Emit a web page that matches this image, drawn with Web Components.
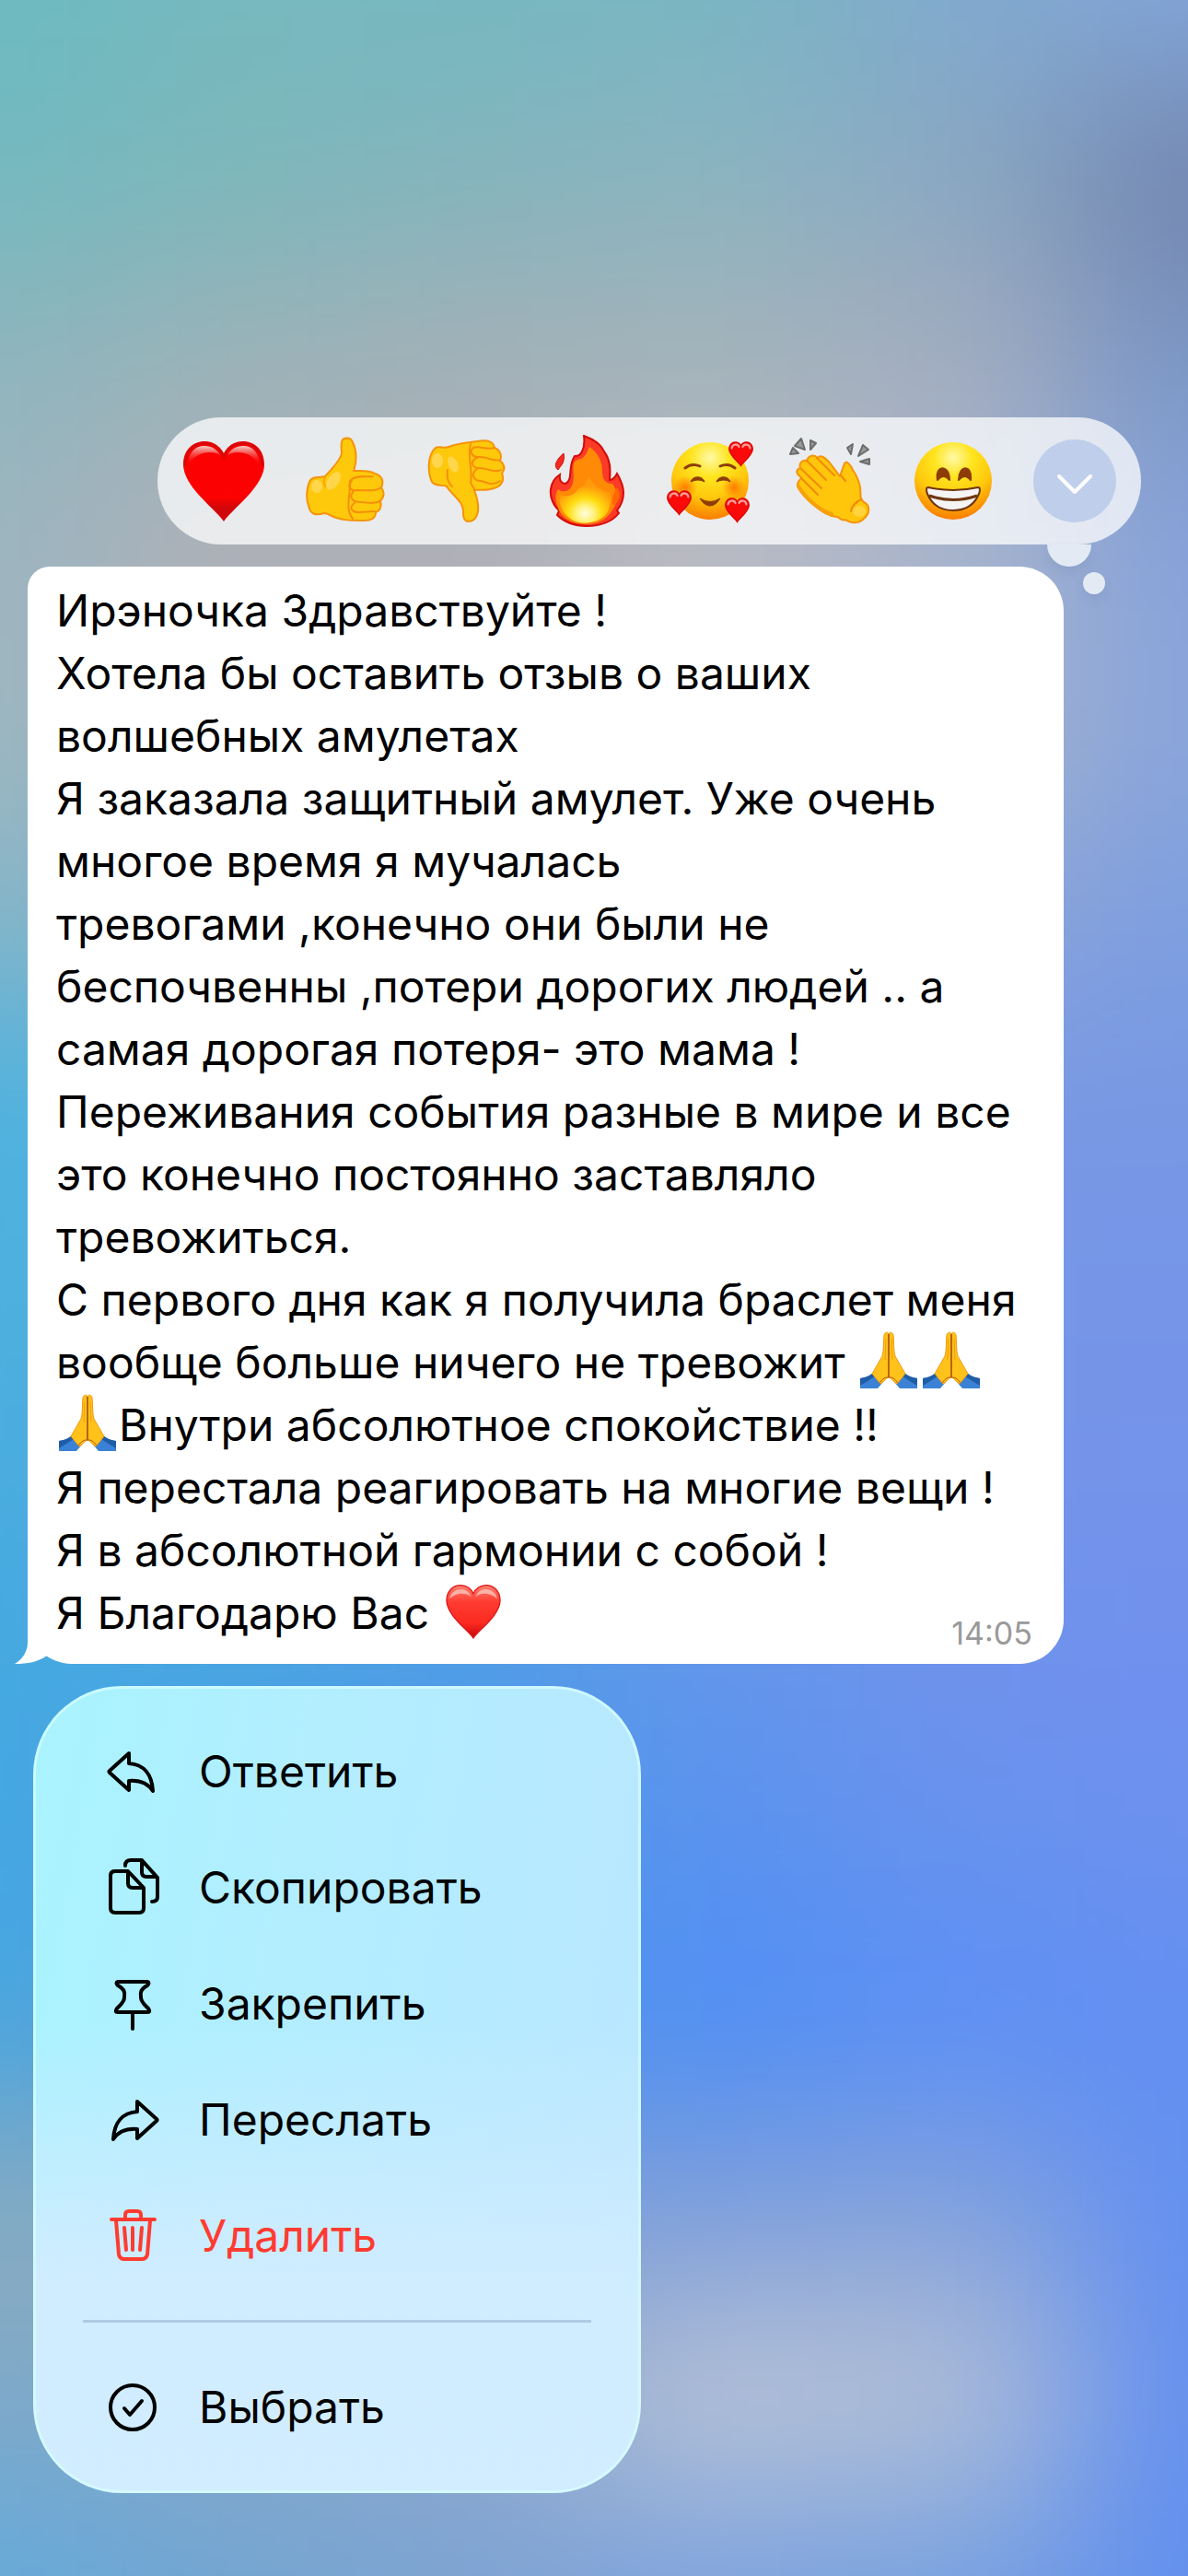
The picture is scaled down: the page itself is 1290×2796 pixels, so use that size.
<!DOCTYPE html>
<html lang="ru">
<head>
<meta charset="utf-8">
<meta name="viewport" content="width=device-width, initial-scale=1">
<title>Сообщение</title>
<style>
html, body {
    margin: 0;
    min-height: 100%;
}
body {
    font-family: Inter, "Noto Sans", sans-serif;
    font-size: 48px;
    line-height: 68px;
    color: #000;
    background: #6c97e4;
}
</style>
</head>
<body>
<message-overlay>
    <reaction-bar slot="reactions"></reaction-bar>
    <message-bubble time="14:05">Ирэночка Здравствуйте !<br>
Хотела бы оставить отзыв о ваших<br>
волшебных амулетах<br>
Я заказала защитный амулет. Уже очень<br>
многое время я мучалась<br>
тревогами ,конечно они были не<br>
беспочвенны ,потери дорогих людей .. а<br>
самая дорогая потеря- это мама !<br>
Переживания события разные в мире и все<br>
это конечно постоянно заставляло<br>
тревожиться.<br>
С первого дня как я получила браслет меня<br>
вообще больше ничего не тревожит <emoji-icon name="pray"></emoji-icon><emoji-icon name="pray"></emoji-icon><br>
<emoji-icon name="pray"></emoji-icon>Внутри абсолютное спокойствие !!<br>
Я перестала реагировать на многие вещи !<br>
Я в абсолютной гармонии с собой !<br>
Я Благодарю Вас <emoji-icon name="love"></emoji-icon></message-bubble>
    <context-menu slot="menu">
        <menu-item icon="reply">Ответить</menu-item>
        <menu-item icon="copy">Скопировать</menu-item>
        <menu-item icon="pin">Закрепить</menu-item>
        <menu-item icon="forward">Переслать</menu-item>
        <menu-item icon="trash" danger>Удалить</menu-item>
        <hr>
        <menu-item icon="select">Выбрать</menu-item>
    </context-menu>
</message-overlay>

<script>
//Drawings//////////////////////////////////////////////////////////////
const faceDefs = `
<radialGradient id="face" cx=".5" cy=".2" r=".82">
    <stop offset="0" stop-color="#fff9a8"/>
    <stop offset=".3" stop-color="#ffe51f"/>
    <stop offset=".62" stop-color="#ffc90c"/>
    <stop offset="1" stop-color="#f97800"/>
</radialGradient>`;

const heartPath = "M50 94C43 82 6 57 6 32C6 16 17 7 29 7C39 7 47 13 50 21C53 13 61 7 71 7C83 7 94 16 94 32C94 57 57 82 50 94Z";

const smallHeart = (x, y) => `
<g transform="translate(${x} ${y}) scale(.29)">
    <path d="${heartPath}" fill="#fb0a0a" stroke="#dc0505" stroke-width="5"/>
    <path d="M16 29C17 12 39 12 43 24M57 24C61 12 83 12 84 29" fill="none" stroke="#ff9c94" stroke-width="8" stroke-linecap="round"/>
</g>`;

const emojis = {
    heart: { label: "Сердце", box: 100, art: `
        <defs>
            <linearGradient id="red" x1="0" y1="0" x2="0" y2="1">
                <stop offset="0" stop-color="#fa0000"/>
                <stop offset=".7" stop-color="#fd0202"/>
                <stop offset=".84" stop-color="#ce080b"/>
                <stop offset="1" stop-color="#d5090b"/>
            </linearGradient>
            <linearGradient id="gloss" x1="0" y1="0" x2="0" y2="1">
                <stop offset="0" stop-color="#f0d0c8"/>
                <stop offset="1" stop-color="#fd0202" stop-opacity="0"/>
            </linearGradient>
        </defs>
        <path d="${heartPath}" fill="url(#red)"/>
        <path d="M8 34C8 17 18 9 29 9C39 9 47 15 50 24C53 15 61 9 71 9C82 9 92 17 92 34" fill="none" stroke="#d90808" stroke-width="3"/>
        <path d="M11 34C11 19 19 12 29 12C37 12 43 16 46 22C38 17 20 17 11 34Z" fill="url(#gloss)"/>
        <path d="M89 34C89 19 81 12 71 12C63 12 57 16 54 22C62 17 80 17 89 34Z" fill="url(#gloss)"/>` },
    up: { label: "Нравится", box: 100, art: `
        <path d="M46 8C47 2 56 2 58 8C62 16 63 28 59 39C68 39 76 38 82 42C90 44 92 51 89 57C93 62 92 68 88 72C90 78 87 83 83 84C83 91 78 93 70 93C57 93 50 93 40 90C34 88 31 85 27 85C17 88 12 86 10 77C7 69 8 58 11 51C14 44 22 47 28 45C34 38 45 28 46 20C46 15 45 12 46 8Z" fill="#ffc90b" stroke="#f5930a" stroke-width="2"/>
        <path d="M56 49C62 43 73 46 80 45M57 50C51 56 56 61 62 60C73 60 83 62 89 57M59 61C52 69 60 73 66 73C76 74 84 75 88 71M60 74C53 79 57 84 65 84L82 83M55 50C56 65 49 80 58 91" fill="none" stroke="#f58f08" stroke-width="2" stroke-linecap="round"/>
        <path d="M28 46C25 53 28 58 33 57" fill="none" stroke="#f8a70b" stroke-width="2"/>
        <ellipse cx="19" cy="56" rx="6" ry="7" fill="#ffd64c"/>
        <ellipse cx="37" cy="50" rx="6" ry="11" fill="#ffd64c" transform="rotate(35 37 50)"/>` },
    down: { label: "Не нравится", box: 100, art: `
        <path d="M16 14C20 12 25 15 30 13C42 9 54 8 61 7C72 5 79 7 80 14C87 17 88 23 86 28C92 33 91 38 88 42C91 49 88 56 79 58C72 61 64 59 58 60C63 73 65 88 56 93C49 96 46 92 46 85C47 72 35 67 28 56C23 53 17 57 12 51C8 43 6 23 16 14Z" fill="#ffc90b" stroke="#f5930a" stroke-width="2"/>
        <path d="M80 14C71 17 63 11 57 14C52 18 56 25 63 24C72 23 79 30 86 27M61 25C52 29 56 36 63 36C73 36 80 42 87 38M61 37C54 42 57 50 65 50C73 52 77 56 86 50M54 10C50 22 57 42 54 52L58 59M29 38C28 46 29 52 34 56" fill="none" stroke="#f58f08" stroke-width="2" stroke-linecap="round"/>
        <ellipse cx="18" cy="28" rx="6" ry="8" fill="#ffd64c"/>
        <ellipse cx="35" cy="32" rx="5" ry="9" fill="#ffd64c" transform="rotate(-25 35 32)"/>` },
    fire: { label: "Огонь", box: 100, art: `
        <defs>
            <radialGradient id="glow" cx=".5" cy=".8" r=".6">
                <stop offset="0" stop-color="#fffde0"/>
                <stop offset=".3" stop-color="#fff27a"/>
                <stop offset=".55" stop-color="#ffdc10"/>
                <stop offset="1" stop-color="#ff9a0a"/>
            </radialGradient>
        </defs>
        <path d="M45 1C56 5 64 11 67 18C74 27 74 38 73 49C77 49 79 46 81 42C84 47 88 55 88 63C88 72 85 77 81 82L83 85C75 95 62 99 48 99C34 99 23 94 16 87L18 82C11 76 8 66 9 59C10 51 13 47 19 43C18 50 21 53 25 53C34 49 27 34 35 23C41 24 47 16 45 1Z" fill="#fb3a27" stroke="#d30c08" stroke-width="2"/>
        <path d="M23 20C25 30 20 33 17 38C11 34 16 26 23 20Z" fill="#f32a20" stroke="#d30c08" stroke-width="1"/>
        <path d="M51 13C61 20 65 29 65 40C65 47 68 53 76 53C82 60 83 71 77 80C69 94 58 97 47 97C35 97 23 92 18 82C14 72 13 65 17 59C21 63 29 62 32 55C37 44 29 31 38 27C46 26 48 20 51 13Z" fill="#ff8a05"/>
        <path d="M50 45C55 54 62 60 74 63C75 74 72 85 66 89C57 97 38 98 29 90C21 84 17 73 19 65C27 69 37 64 39 58C44 57 48 53 50 45Z" fill="url(#glow)"/>
        <path d="M81 57C87 65 83 73 77 77C74 72 77 64 81 57Z" fill="#ff6804"/>` },
    love: { label: "Сердце", box: 64, art: `
        <defs>
            <linearGradient id="soft" x1="0" y1="0" x2="0" y2="1">
                <stop offset="0" stop-color="#ff8074"/>
                <stop offset=".32" stop-color="#ff3b30"/>
                <stop offset=".72" stop-color="#fb2a20"/>
                <stop offset="1" stop-color="#c5050a"/>
            </linearGradient>
        </defs>
        <g transform="translate(-1 -1) scale(.66)">
            <path d="${heartPath}" fill="url(#soft)" stroke="#dd1613" stroke-width="2"/>
            <path d="M11 29C13 11 41 7 46 26C37 18 21 20 11 29ZM89 29C87 11 59 7 54 26C63 18 79 20 89 29Z" fill="#ffb1a6"/>
        </g>` },
    hearts: { label: "Влюблён", box: 100, art: `
        <defs>${faceDefs}
            <radialGradient id="cheek">
                <stop offset="0" stop-color="#ff6a00" stop-opacity=".85"/>
                <stop offset="1" stop-color="#ff7a00" stop-opacity="0"/>
            </radialGradient>
        </defs>
        <circle cx="50" cy="50" r="42" fill="url(#face)"/>
        <circle cx="23" cy="57" r="13" fill="url(#cheek)"/>
        <circle cx="76" cy="57" r="13" fill="url(#cheek)"/>
        <path d="M23 36Q30 30 39 34M61 34Q70 30 77 36" fill="none" stroke="#8e3d06" stroke-width="3" stroke-linecap="round"/>
        <path d="M29 51C31 44 42 44 44 51Q37 47 29 51ZM57 51C59 44 70 44 72 51Q65 47 57 51Z" fill="#8e3d06" stroke="#8e3d06" stroke-width="1"/>
        <path d="M39 69Q50 76 61 69Q56 77 50 77Q44 77 39 69Z" fill="#8e3d06" stroke="#8e3d06" stroke-linejoin="round"/>
        ${smallHeart(69, 6)}${smallHeart(2, 59)}${smallHeart(65, 67)}` },
    clap: { label: "Аплодисменты", box: 100, art: `
        <path d="M59 45L64 31C66 27 71 33 73 38C77 44 80 50 81 57C82 65 80 69 85 73C93 77 91 86 85 91C79 97 70 96 65 92C61 94 59 90 56 89C46 88 39 84 32 76C24 69 15 60 13 55C12 50 17 49 17 46C12 43 10 38 16 36C14 30 19 27 23 28C25 22 31 21 35 25C38 21 43 25 47 29Z" fill="#ffc60b" stroke="#f5930a" stroke-width="2" stroke-linejoin="round"/>
        <path d="M23 28L44 49M34 25L53 44M17 37L39 58M17 47L35 65M60 44L65 50M82 70C76 73 72 77 71 83" fill="none" stroke="#f18a08" stroke-width="2" stroke-linecap="round"/>
        <path d="M14 56C20 67 36 82 50 86" fill="none" stroke="#f7a00a" stroke-width="4" stroke-linecap="round"/>
        <ellipse cx="80" cy="83" rx="7" ry="6" fill="#ffd43d"/>
        <path d="M17 4L10 12L21 16ZM27 6L33 9L27 16ZM8 14L14 20L5 21ZM73 10L67 14L71 21ZM84 11L90 16L79 23ZM91 26L81 29L91 32Z" fill="#999" stroke="#6d6d6d" stroke-width="2" stroke-linejoin="round"/>` },
    grin: { label: "Улыбка", box: 100, art: `
        <defs>${faceDefs}</defs>
        <circle cx="50" cy="50" r="42" fill="url(#face)"/>
        <path d="M33 49C30 32 46 32 46 49Q40 41 33 49ZM56 49C56 32 71 32 69 49Q62 41 56 49Z" fill="#8e3d06" stroke="#8e3d06" stroke-width="2" stroke-linejoin="round"/>
        <path d="M23 57Q50 63 77 57C80 57 79 61 78 64C73 76 63 82 50 82C37 82 27 76 22 64C21 61 20 57 23 57Z" fill="#f4f4f4" stroke="#70350f" stroke-width="2"/>
        <path d="M24 66Q50 75 76 66" fill="none" stroke="#70350f" stroke-width="3"/>` },
    pray: { label: "Спасибо", box: 64, art: `
        <path d="M1 51Q10 50 15 45L26 55L20 62H1ZM63 51Q54 50 49 45L38 55L44 62H63Z" fill="#3b82d6"/>
        <path d="M1 51Q9 50 14 46L17 49Q11 53 1 59ZM63 51Q55 50 50 46L47 49Q53 53 63 59Z" fill="#1f5da6"/>
        <path d="M27 4C28 1 31 0 32 3C33 0 36 1 37 4C38 12 37 21 39 27C43 33 46 40 50 46L41 57C37 55 36 51 32 50C28 51 27 55 23 57L14 46C18 40 21 33 25 27C27 21 26 12 27 4Z" fill="#ffc21a" stroke="#f29a0c" stroke-width="1"/>
        <path d="M32 3V50" fill="none" stroke="#b9650f" stroke-width="2"/>
        <path d="M29 8L28 31M35 8L36 31" fill="none" stroke="#f0a010" stroke-width="1"/>
        <path d="M22 56Q27 49 32 50Q37 49 42 56" fill="none" stroke="#b45f12" stroke-width="1"/>` }
};

const icons = {
    reply: `<path d="M32 16L11 35Q10 36 11 37L32 56V46C43 45 52 48 58 57C57 39 48 28 32 27Z"/>`,
    copy: `<path d="M31 18H17Q12 18 12 23V58Q12 63 17 63H43Q48 63 48 58V36ZM31 18V31Q31 36 36 36H48"/>
        <path d="M28 12Q28 6 34 6H46L63 25V46Q63 51 57 51M46 6V19Q46 24 51 24H62"/>`,
    pin: `<path d="M20 12H52Q55 13 52 16C45 20 44 23 45 29C45 34 49 37 53 41Q56 45 52 45H20Q16 45 19 41C23 37 27 34 27 29C28 23 27 20 20 16Q17 13 20 12ZM36 45V63"/>`,
    forward: `<path d="M41 16L62 35Q63 36 62 37L41 56V46C30 45 21 48 15 57C16 39 25 28 41 27Z"/>`,
    trash: `<path d="M13 18H60M28 17V13Q28 9 32 9H41Q45 9 45 13V17M18 19L21 56Q22 61 27 61H46Q51 61 52 56L55 19M27 27L29 51M36 27V51M46 27L44 51"/>`,
    select: `<circle cx="36" cy="36" r="24"/><path d="M27 37L33 44L46 29"/>`
};


//Emoji/////////////////////////////////////////////////////////////////
class EmojiIcon extends HTMLElement {
    constructor() {
        super();
        this.attachShadow({ mode: "open" });
    }

    connectedCallback() {
        const emoji = emojis[this.getAttribute("name")];
        this.shadowRoot.innerHTML = `
<style>
:host {
    display: inline-block;
    width: 64px;
    height: 64px;
    margin: 0 2px;
    vertical-align: -13px;
}
svg {
    display: block;
    width: 100%;
    height: 100%;
}
</style>
<svg viewBox="0 0 ${emoji.box} ${emoji.box}" role="img" aria-label="${emoji.label}">${emoji.art}</svg>`;
    }
}


//Wallpaper/////////////////////////////////////////////////////////////
// rows of colours from top to bottom, blurred into one another
const wallpaperColors = [
    "6cbac0 76b9be 76b8c0 79b5c2 81aace 82a6da",
    "74b9bf 7cb7bb 84b4bd 8bb4c0 8aa8c2 7284ac",
    "90b4bd 9cb2b8 a4b0b7 a4b2b9 a5adbe 7a96c6",
    "9db5c0 b0b0b7 b0b0b7 bcbcc4 a9b5cd 86a2db",
    "9cb6c0 b0b0b7 b0b0b7 bcbcc4 a6b3cc 8aa5da",
    "84b5c8 90b0c8 90b0c8 90a8d0 8ca5d6 7d9ee0",
    "4db3df 60a8e0 60a8e0 7098e4 7898e4 7898e4",
    "4cb1de 55a8e0 60a0e4 7098e4 7696e6 7695e8",
    "49addf 50a6e0 58a0e4 6898e8 7494e8 7493ea",
    "45a9e0 4aa4e2 4f9ce6 6296ea 6f92ec 7090ee",
    "44a7e3 48a0e5 4f98ea 5992ef 6692ee 6c91ee",
    "4ba5de 50a0e0 5094ec 508ff4 5b8ff6 638ff2",
    "88abc0 85aac8 80a0d0 809fda 84a2da 6490f0",
    "7fa9c8 88a8c8 90a8cc bac4d6 b4c0d6 6490ee",
    "64aadb 72a5d2 7da3d3 7ca2de 76a0e0 6390ee"
];

const wallpaperTemplate = document.createElement("template");
wallpaperTemplate.innerHTML = `
<style>
:host {
    position: absolute;
    inset: 0;
    z-index: -1;
    overflow: hidden;
}
.grid {
    position: absolute;
    inset: -11% -30%;
    display: grid;
    grid-template-columns: 2fr 1fr 1fr 1fr 1fr 2fr;
    grid-template-rows: 2fr repeat(13, 1fr) 2fr;
    filter: blur(90px);
}
</style>
<div class="grid"></div>
`;

class ChatWallpaper extends HTMLElement {
    constructor() {
        super();
        this.attachShadow({ mode: "open" });
        this.shadowRoot.appendChild(wallpaperTemplate.content.cloneNode(true));
        const grid = this.shadowRoot.querySelector(".grid");
        wallpaperColors.join(" ").split(" ").forEach(color => {
            const cell = document.createElement("div");
            cell.style.background = "#" + color;
            grid.appendChild(cell);
        });
    }
}


//Overlay///////////////////////////////////////////////////////////////
const overlayTemplate = document.createElement("template");
overlayTemplate.innerHTML = `
<style>
:host {
    display: block;
    position: relative;
    z-index: 0;
}
main {
    display: flex;
    flex-direction: column;
    align-items: flex-start;
    gap: 24px;
    min-height: 100vh;
    box-sizing: border-box;
    padding: 453px 51px 90px 30px;
}
::slotted([slot="reactions"]) {
    align-self: flex-end;
}
::slotted([slot="menu"]) {
    margin-left: 6px;
}
</style>
<chat-wallpaper></chat-wallpaper>
<main>
    <slot name="reactions"></slot>
    <slot></slot>
    <slot name="menu"></slot>
</main>
`;

class MessageOverlay extends HTMLElement {
    constructor() {
        super();
        this.attachShadow({ mode: "open" });
        this.shadowRoot.appendChild(overlayTemplate.content.cloneNode(true));
    }
}


//Reaction bar//////////////////////////////////////////////////////////
const reactionTemplate = document.createElement("template");
reactionTemplate.innerHTML = `
<style>
:host {
    display: flex;
    position: relative;
    padding: 0 6px;
    border-radius: 69px;
    background: rgba(255, 255, 255, .74);
}
button {
    display: flex;
    align-items: center;
    justify-content: center;
    width: 132px;
    height: 138px;
    padding: 0;
    border: 0;
    background: none;
}
emoji-icon {
    width: 100px;
    height: 100px;
    margin: 0;
}
.more svg {
    width: 90px;
    height: 90px;
    border-radius: 50%;
    background: #bfceea;
}
/* thought bubbles under the bar */
.puff {
    position: absolute;
    top: 100%;
    right: 54px;
    width: 48px;
    height: 24px;
    border-radius: 0 0 24px 24px;
    background: #e3eaf4;
    box-shadow: 0 6px 12px rgba(60, 80, 120, .1);
}
.puff.small {
    top: 168px;
    right: 39px;
    width: 24px;
    border-radius: 50%;
}
</style>
<button class="more" aria-label="Ещё">
    <svg viewBox="0 0 90 90"><path d="M28 40L45 57L62 40" fill="none" stroke="#fff" stroke-width="4" stroke-linecap="round" stroke-linejoin="round"/></svg>
</button>
<span class="puff"></span>
<span class="puff small"></span>
`;

class ReactionBar extends HTMLElement {
    constructor() {
        super();
        this.attachShadow({ mode: "open" });
        this.shadowRoot.appendChild(reactionTemplate.content.cloneNode(true));
        const more = this.shadowRoot.querySelector(".more");
        ["heart", "up", "down", "fire", "hearts", "clap", "grin"].forEach(name => {
            const button = document.createElement("button");
            button.setAttribute("aria-label", emojis[name].label);
            button.innerHTML = `<emoji-icon name="${name}"></emoji-icon>`;
            more.before(button);
        });
    }
}


//Message///////////////////////////////////////////////////////////////
const bubbleTemplate = document.createElement("template");
bubbleTemplate.innerHTML = `
<style>
:host {
    display: grid;
    position: relative;
    align-self: stretch;
    margin-right: 84px;
    padding: 14px 34px 13px 31px;
    border-radius: 24px 48px 48px 48px;
    background: #fff;
}
.text, time {
    grid-area: 1 / 1;
}
.text {
    margin-bottom: 8px;
}
time {
    place-self: end;
    font-size: 34px;
    line-height: 40px;
    color: #999;
}
.tail {
    position: absolute;
    left: -14px;
    bottom: 0;
    width: 40px;
    height: 48px;
}
</style>
<svg class="tail" viewBox="0 0 40 48" aria-hidden="true">
    <path d="M14 0V25C14 35 8 43 0 48C14 48 25 46 35 39L38 0Z" fill="#fff"/>
</svg>
<div class="text"><slot></slot></div>
<time></time>
`;

class MessageBubble extends HTMLElement {
    constructor() {
        super();
        this.attachShadow({ mode: "open" });
        this.shadowRoot.appendChild(bubbleTemplate.content.cloneNode(true));
        this.shadowRoot.querySelector("time").textContent = this.getAttribute("time");
    }
}


//Menu//////////////////////////////////////////////////////////////////
const menuTemplate = document.createElement("template");
menuTemplate.innerHTML = `
<style>
:host {
    display: flex;
    flex-direction: column;
    box-sizing: border-box;
    width: 660px;
    max-width: 100%;
    padding: 30px 0;
    border-radius: 96px;
    background:
        linear-gradient(to bottom, rgba(210, 237, 255, 0) 42%, #d0ecff 74%, #d1edff),
        linear-gradient(100deg, #a9f3ff, #b3edff 45%, #bae6ff);
    box-shadow: inset 0 0 0 3px rgba(215, 255, 255, .7);
}
::slotted(hr) {
    width: 552px;
    height: 3px;
    margin: 28px auto 29px;
    border: 0;
    background: #afcae2;
}
</style>
<slot></slot>
`;

class ContextMenu extends HTMLElement {
    constructor() {
        super();
        this.attachShadow({ mode: "open" });
        this.shadowRoot.appendChild(menuTemplate.content.cloneNode(true));
    }
}

const itemTemplate = document.createElement("template");
itemTemplate.innerHTML = `
<style>
:host {
    display: block;
    color: #000;
}
:host([danger]) {
    color: #ff3b30;
}
button {
    display: flex;
    align-items: center;
    gap: 36px;
    width: 100%;
    height: 126px;
    padding: 0 72px;
    border: 0;
    background: none;
    color: inherit;
    font: inherit;
    text-align: left;
}
svg {
    width: 72px;
    height: 72px;
    fill: none;
    stroke: currentColor;
    stroke-width: 4;
    stroke-linecap: round;
    stroke-linejoin: round;
}
</style>
<button><svg viewBox="0 0 72 72" aria-hidden="true"></svg><span><slot></slot></span></button>
`;

class MenuItem extends HTMLElement {
    constructor() {
        super();
        this.attachShadow({ mode: "open" });
        this.shadowRoot.appendChild(itemTemplate.content.cloneNode(true));
        this.shadowRoot.querySelector("svg").innerHTML = icons[this.getAttribute("icon")];
    }
}


window.customElements.define("emoji-icon", EmojiIcon);
window.customElements.define("chat-wallpaper", ChatWallpaper);
window.customElements.define("reaction-bar", ReactionBar);
window.customElements.define("message-bubble", MessageBubble);
window.customElements.define("menu-item", MenuItem);
window.customElements.define("context-menu", ContextMenu);
window.customElements.define("message-overlay", MessageOverlay);
</script>
</body>
</html>
